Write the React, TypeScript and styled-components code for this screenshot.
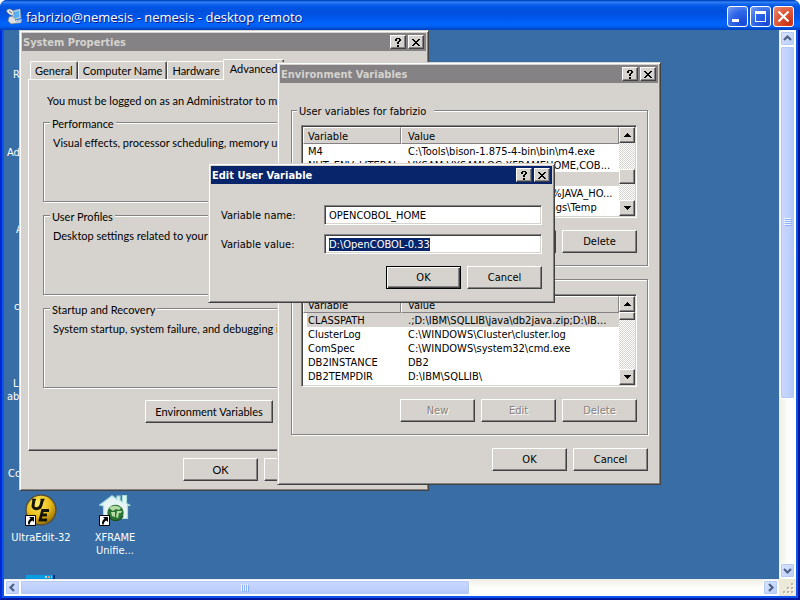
import React, { ReactNode, useEffect, useId, useRef } from "react";
import styled, { createGlobalStyle, css } from "styled-components";

const face = "#d6d3ce";
const shade = "#848284";
const dark = "#424142";
const navy = "#08246b";
const tahoma = `"DejaVu Sans Condensed", "Noto Sans", sans-serif`;
const shellFont = `Lato, "Liberation Sans", sans-serif`;

const Global = createGlobalStyle`
  *, *::before, *::after { box-sizing: border-box; }
  html, body, #root { height: 100%; margin: 0; }
  body { background: #fff; overflow: hidden; font: 11px/14px ${tahoma}; color: #000; }
  button, input { font: inherit; color: inherit; margin: 0; padding: 0; border-radius: 0; }
`;

/* ---------- remote desktop frame ---------- */

const Frame = styled.div`
  display: flex;
  flex-direction: column;
  height: 100vh;
  overflow: hidden;
  border-radius: 7px 7px 0 0;
  background: #0846e0;
`;

const FrameTitle = styled.header`
  display: flex;
  align-items: center;
  flex: none;
  height: 30px;
  padding: 3px 6px 0 6px;
  gap: 3px;
  color: #fff;
  font: 500 13px/18px "Open Sans", "Noto Sans", sans-serif;
  text-shadow: 1px 1px 0 #0a1883;
  background: linear-gradient(
    #0048c8 0, #0048c8 1px, #3c8cf8 2px, #2070f0 3px, #0058e6 6px, #0050dc 11px,
    #0054e8 17px, #0064fc 23px, #0062f6 26px, #0050d8 28px, #0040c0 30px
  );
`;

const FrameName = styled.h1`
  flex: 1;
  margin: 0;
  font: inherit;
  white-space: nowrap;
`;

const FrameButtons = styled.div`
  display: flex;
  gap: 2px;
`;

const FrameButton = styled.button<{ $danger?: boolean }>`
  display: grid;
  place-items: center;
  width: 21px;
  height: 21px;
  border: 1px solid #fff;
  border-radius: 3px;
  background: ${(p) =>
    p.$danger
      ? "radial-gradient(circle at 80% 85%, #c83010, #e0583a 55%, #ec9078)"
      : "radial-gradient(circle at 80% 85%, #1848d8, #3068e8 55%, #7ca0f4)"};
`;

const FrameBody = styled.div`
  flex: 1;
  min-height: 0;
  display: grid;
  grid-template: minmax(0, 1fr) 17px / minmax(0, 1fr) 17px;
  border: 2px solid #00149c;
  border-top: 0;
  border-left-color: #0028d4;
  padding: 0 2px 2px;
  background: #0c54ec;
`;

const Bar = styled.div<{ $horizontal?: boolean }>`
  display: flex;
  flex-direction: ${(p) => (p.$horizontal ? "row" : "column")};
  padding: 1px;
  background: linear-gradient(${(p) => (p.$horizontal ? "180deg" : "90deg")}, #eeede5, #fdfdfa 50%, #fff);
`;

const barSkin = css`
  border: 1px solid #fff;
  border-radius: 2px;
  box-shadow: inset 0 0 0 1px #b4c8f6;
`;

const BarButton = styled.button`
  display: grid;
  place-items: center;
  flex: none;
  width: 15px;
  height: 15px;
  ${barSkin}
  background: linear-gradient(135deg, #dce6ff, #b8ccfa);
`;

const BarThumb = styled.div<{ $horizontal?: boolean; $part: number }>`
  flex: ${(p) => p.$part} 1 0;
  display: grid;
  place-items: center;
  ${barSkin}
  background: linear-gradient(${(p) => (p.$horizontal ? "180deg" : "90deg")}, #cad8ff, #c0d0fb 60%, #b0c6f6);
`;

const BarRest = styled.div<{ $part: number }>`
  flex: ${(p) => p.$part} 1 0;
`;

const Corner = styled.div`
  display: grid;
  place-items: end;
  padding: 2px;
  background: #ece9d8;
`;

/* ---------- desktop ---------- */

const Desktop = styled.main`
  position: relative;
  overflow: hidden;
  background: #396da5;
`;

const Shortcut = styled.div<{ $x: number; $y: number }>`
  position: absolute;
  left: ${(p) => p.$x}px;
  top: ${(p) => p.$y}px;
  display: flex;
  flex-direction: column;
  align-items: center;
  gap: 5px;
  width: 74px;
  color: #fff;
  line-height: 13px;
  text-align: center;
`;

const Stub = styled.div<{ $x: number; $y: number }>`
  position: absolute;
  left: ${(p) => p.$x}px;
  top: ${(p) => p.$y}px;
  color: #fff;
  line-height: 13px;
  white-space: pre;
`;

/* ---------- classic controls ---------- */

const raised = css`
  border: 1px solid;
  border-color: #fff ${dark} ${dark} #fff;
  box-shadow: inset -1px -1px 0 ${shade};
  background: ${face};
`;

const Window = styled.section<{ $x: number; $y: number; $width: number; $shell?: boolean }>`
  position: absolute;
  left: ${(p) => p.$x}px;
  top: ${(p) => p.$y}px;
  width: ${(p) => p.$width}px;
  padding: 2px;
  border: 1px solid;
  border-color: ${face} ${dark} ${dark} ${face};
  box-shadow: inset 1px 1px 0 #fff, inset -1px -1px 0 ${shade};
  background: ${face};
  font-family: ${(p) => (p.$shell ? shellFont : tahoma)};
`;

const Caption = styled.div<{ $active?: boolean }>`
  display: flex;
  align-items: center;
  gap: 2px;
  height: 18px;
  padding: 0 2px 0 1px;
  background: ${(p) => (p.$active ? navy : shade)};
  color: ${(p) => (p.$active ? "#fff" : face)};
`;

const CaptionText = styled.h2`
  flex: 1;
  margin: 0;
  padding-top: 2px;
  font: bold 11px/16px ${tahoma};
  white-space: nowrap;
`;

const CaptionButton = styled.button`
  ${raised}
  display: grid;
  place-items: center;
  width: 16px;
  height: 14px;
  color: #000;
`;

const Push = styled.button<{ $wide?: boolean; $default?: boolean }>`
  ${raised}
  width: ${(p) => (p.$wide ? 128 : 75)}px;
  height: 23px;
  line-height: 18px;
  white-space: nowrap;
  ${(p) =>
    p.$default &&
    css`
      border-color: #000;
      box-shadow: inset 1px 1px 0 #fff, inset -1px -1px 0 ${dark}, inset -2px -2px 0 ${shade};
    `}
  &:disabled {
    color: ${shade};
    text-shadow: 1px 1px 0 #fff;
  }
`;

const Actions = styled.div<{ $top: number }>`
  display: flex;
  justify-content: flex-end;
  gap: 6px;
  margin-top: ${(p) => p.$top}px;
`;

const Group = styled.fieldset`
  min-width: 0;
  margin: 0 0 7px;
  padding: 8px 10px 12px 9px;
  border: 1px solid ${shade};
  box-shadow: inset 1px 1px 0 #fff, 1px 1px 0 #fff;
`;

const Legend = styled.legend<{ $long?: boolean }>`
  margin-left: ${(p) => (p.$long ? -4 : -3)}px;
  padding: 2px ${(p) => (p.$long ? 8 : 2)}px 0 2px;
  line-height: 11px;
  background: ${face};
`;

/* System Properties */

const PropertiesBody = styled.div`
  padding: 8px 6px 7px;
`;

const TabStrip = styled.div`
  display: flex;
  align-items: flex-end;
  height: 20px;
  padding-left: 2px;
`;

const Tab = styled.button<{ $active?: boolean }>`
  height: ${(p) => (p.$active ? 21 : 18)}px;
  padding: ${(p) => (p.$active ? "0 6px 3px" : "0 4px")};
  border: 1px solid;
  border-color: #fff ${dark} transparent #fff;
  border-bottom: 0;
  border-radius: 2px 2px 0 0;
  box-shadow: inset -1px 0 0 ${shade};
  background: ${face};
  white-space: nowrap;
  ${(p) =>
    p.$active &&
    css`
      position: relative;
      margin: 0 0 -1px -2px;
    `}
`;

const Pane = styled.div`
  padding: 14px 10px 27px 14px;
  border: 1px solid;
  border-color: #fff ${dark} ${dark} #fff;
  box-shadow: inset -1px -1px 0 ${shade};
`;

const Notice = styled.p`
  margin: 0 0 8px 4px;
  white-space: nowrap;
`;

const Topic = styled(Group)`
  min-height: 86px;
  padding-top: 7px;
`;

const TopicText = styled.p`
  margin: 0;
  white-space: nowrap;
  overflow: hidden;
`;

const PaneActions = styled(Actions)`
  gap: 8px;
`;

/* Environment Variables */

const VariablesBody = styled.div`
  padding: 21px 10px 11px 11px;
`;

const ListBox = styled.div`
  display: grid;
  grid-template-columns: minmax(0, 1fr) 16px;
  height: 93px;
  padding: 1px;
  border: 1px solid;
  border-color: ${shade} #fff #fff ${shade};
  box-shadow: inset 1px 1px 0 ${dark}, inset -1px -1px 0 ${face};
  background: #fff;
`;

const ListView = styled.div`
  overflow: hidden;
`;

const Table = styled.table`
  width: 100%;
  border-spacing: 0;
  table-layout: fixed;
  line-height: 12px;
`;

const HeadCell = styled.th<{ $first?: boolean }>`
  width: ${(p) => (p.$first ? "98px" : "auto")};
  height: 17px;
  padding: 2px 0 0 ${(p) => (p.$first ? 4 : 6)}px;
  border: 1px solid;
  border-color: #fff ${shade} ${shade} #fff;
  background: ${face};
  font-weight: normal;
  text-align: left;
`;

const Cell = styled.td<{ $first?: boolean; $selected?: boolean }>`
  height: 14px;
  padding: 2px 0 0 ${(p) => (p.$first ? 1 : 7)}px;
  border-left: ${(p) => (p.$first ? "4px solid #fff" : "0")};
  background: ${(p) => (p.$selected ? face : "#fff")};
  overflow: hidden;
  white-space: nowrap;
`;

const ClassicBar = styled.div`
  display: flex;
  flex-direction: column;
  background: repeating-conic-gradient(#fff 0 25%, ${face} 0 50%) 0 0 / 2px 2px;
`;

const ClassicBarButton = styled.button`
  ${raised}
  flex: none;
  display: grid;
  place-items: center;
  height: 16px;
`;

const ClassicTrack = styled.div<{ $before: number }>`
  flex: 1;
  padding-top: ${(p) => p.$before}px;
`;

const ClassicThumb = styled.div<{ $height: number }>`
  ${raised}
  height: ${(p) => p.$height}px;
`;

/* Edit User Variable */

const EditBody = styled.form`
  padding: 21px 10px 11px;
`;

const Fields = styled.div`
  display: grid;
  grid-template-columns: 103px minmax(0, 1fr);
  row-gap: 9px;
  align-items: center;
`;

const FieldLabel = styled.label`
  padding-top: 2px;
`;

const Field = styled.input`
  width: 100%;
  height: 20px;
  padding: 0 5px 0 4px;
  border: 1px solid;
  border-color: ${shade} #fff #fff ${shade};
  box-shadow: inset 1px 1px 0 ${dark}, inset -1px -1px 0 ${face};
  background: #fff;
  outline: none;
  &::selection {
    background: ${navy};
    color: #fff;
  }
`;

/* ---------- drawings ---------- */

const RemoteIcon = () => (
  <svg width="17" height="17" viewBox="0 0 17 17" aria-hidden="true">
    <path d="M6 3 L14 1 L15 10 L7 12 Z" fill="#d8e4ec" stroke="#8098b0" strokeWidth=".7" />
    <path d="M7.5 4 L13 2.6 L13.8 9 L8.3 10.5 Z" fill="#58b0f8" />
    <path d="M1 2 C3 0 7 1 8 5 C8 8 5 8 3 6 C1 5 0 3 1 2 Z" fill="#e8e8e4" stroke="#707880" strokeWidth=".7" />
    <path d="M3 3 L6 5" stroke="#606870" />
    <path d="M3 9 C6 7 9 9 10 13 L13 15 L5 16 L2 13 Z" fill="#dce0e0" stroke="#707880" strokeWidth=".7" />
    <path d="M10 12 L16 11 L15 15 L10 15 Z" fill="#b8c8d8" />
  </svg>
);

const CloseGlyph = () => (
  <svg width="8" height="7" viewBox="0 0 8 7" shapeRendering="crispEdges" aria-hidden="true">
    <path
      fill="#000"
      d="M0 0h2v1h-2zM6 0h2v1h-2zM1 1h2v1h-2zM5 1h2v1h-2zM2 2h4v1h-4zM3 3h2v1h-2zM2 4h4v1h-4zM1 5h2v1h-2zM5 5h2v1h-2zM0 6h2v1h-2zM6 6h2v1h-2z"
    />
  </svg>
);

const HelpGlyph = () => (
  <svg width="6" height="9" viewBox="0 0 6 9" shapeRendering="crispEdges" aria-hidden="true">
    <path fill="#000" d="M1 0h4v1h-4zM0 1h2v2h-2zM4 1h2v2h-2zM3 3h2v1h-2zM2 4h2v2h-2zM2 7h2v2h-2z" />
  </svg>
);

const Triangle = ({ down }: { down?: boolean }) => (
  <svg width="7" height="4" viewBox="0 0 7 4" shapeRendering="crispEdges" aria-hidden="true">
    <path
      fill="#000"
      d={
        down
          ? "M0 0h7v1h-7zM1 1h5v1h-5zM2 2h3v1h-3zM3 3h1v1h-1z"
          : "M3 0h1v1h-1zM2 1h3v1h-3zM1 2h5v1h-5zM0 3h7v1h-7z"
      }
    />
  </svg>
);

const chevrons = {
  up: "M1 6 L4.500 2.500 L8 6",
  down: "M1 3 L4.500 6.500 L8 3",
  left: "M6 1 L2.500 4.500 L6 8",
  right: "M3 1 L6.500 4.500 L3 8",
};

const Chevron = ({ to }: { to: keyof typeof chevrons }) => (
  <svg width="9" height="9" viewBox="0 0 9 9" aria-hidden="true">
    <path d={chevrons[to]} fill="none" stroke="#4d6185" strokeWidth="2.2" />
  </svg>
);

const Grip = ({ horizontal }: { horizontal?: boolean }) => (
  <svg width="8" height="8" viewBox="0 0 8 8" shapeRendering="crispEdges" aria-hidden="true">
    <path d={horizontal ? "M0 0h1v7h-1zM2 0h1v7h-1zM4 0h1v7h-1zM6 0h1v7h-1z" : "M0 0h7v1h-7zM0 2h7v1h-7zM0 4h7v1h-7zM0 6h7v1h-7z"} fill="#eef4fe" />
    <path d={horizontal ? "M1 1h1v7h-1zM3 1h1v7h-1zM5 1h1v7h-1zM7 1h1v7h-1z" : "M1 1h7v1h-7zM1 3h7v1h-7zM1 5h7v1h-7zM1 7h7v1h-7z"} fill="#8cb0f8" />
  </svg>
);

const SizeGrip = () => (
  <svg width="11" height="11" viewBox="0 0 11 11" shapeRendering="crispEdges" aria-hidden="true">
    <path fill="#fff" d="M9 1h2v2h-2zM5 5h2v2h-2zM9 5h2v2h-2zM1 9h2v2h-2zM5 9h2v2h-2zM9 9h2v2h-2z" />
    <path fill="#b8b4a4" d="M8 0h2v2h-2zM4 4h2v2h-2zM8 4h2v2h-2zM0 8h2v2h-2zM4 8h2v2h-2zM8 8h2v2h-2z" />
  </svg>
);

const ShortcutArrow = () => (
  <g>
    <path d="M.5 21.500h10v10h-10z" fill="#fff" stroke="#000" />
    <path d="M4 23h5v5l-1.600-1.600c-2 1-2.600 2-2.600 4h-1.600c-.6-2.600.4-4.400 2.400-5.800z" fill="#000" />
  </g>
);

const UltraEditIcon = () => (
  <svg width="32" height="32" viewBox="0 0 32 32" aria-hidden="true">
    <defs>
      <radialGradient id="gold" cx=".4" cy=".3" r=".75">
        <stop offset="0" stopColor="#fff06c" />
        <stop offset=".55" stopColor="#e8bc18" />
        <stop offset="1" stopColor="#8c6404" />
      </radialGradient>
    </defs>
    <circle cx="16" cy="16" r="15" fill="url(#gold)" stroke="#54503c" strokeWidth="1.400" />
    <path d="M9 5.500 L8 12 C8 15.500 15 16 16 11 L17.500 5.500" fill="none" stroke="#181404" strokeWidth="3" />
    <path d="M7 5.500h4M15.500 5.500h4" stroke="#181404" strokeWidth="1.400" />
    <path d="M24 16.500h-6.500l-2.400 9.500h7M16.500 21h5.500" fill="none" stroke="#181404" strokeWidth="2.800" />
    <ShortcutArrow />
  </svg>
);

const XframeIcon = () => (
  <svg width="32" height="32" viewBox="0 0 32 32" aria-hidden="true">
    <path
      d="M0.700 11 L13 1.800 L18 5.300 V2.200 H21 V6.500 L23.500 8 V1.500 H27.500 V9.500 L31.300 11.500 H28.500 V24.500 H4.500 V12 Z"
      fill="#e6f4f4"
      stroke="#a4dcdc"
      strokeWidth="1.200"
    />
    <circle cx="16.500" cy="19" r="8.200" fill="#2c7434" />
    <path d="M10 14c4-3 8-3 12 0l-2 2-3-1-3 2zM12 18l4 0 0 5-3-1zM18 17l5 0-1 2-2 0-1 5-2-1z" fill="#b4dca4" />
    <path d="M9 22c4 6 12 6 15 0" fill="none" stroke="#184c20" strokeWidth="1.200" />
    <ShortcutArrow />
  </svg>
);

const PanelIcon = () => (
  <svg width="32" height="32" viewBox="0 0 32 32" shapeRendering="crispEdges" aria-hidden="true">
    <path d="M1 0h29v32h-29z" fill="#0c9ce4" />
    <path d="M28 0h2v32h-2z" fill="#08246b" />
    <path d="M20 1h2v2h-2z" fill="#a8dcf8" />
    <path d="M23 1h2v2h-2zM26 1h1v2h-1z" fill="#f09060" />
  </svg>
);

/* ---------- composed parts ---------- */

const TitleBar = ({ text, active }: { text: string; active?: boolean }) => (
  <Caption $active={active}>
    <CaptionText>{text}</CaptionText>
    <CaptionButton type="button" aria-label="Help"><HelpGlyph /></CaptionButton>
    <CaptionButton type="button" aria-label="Close"><CloseGlyph /></CaptionButton>
  </Caption>
);

interface Variable {
  name: string;
  value: string;
}

interface VariableGroupProps {
  title: string;
  rows: Variable[];
  selected: string;
  thumb: { before: number; height: number };
  locked?: boolean;
}

const VariableGroup = ({ title, rows, selected, thumb, locked }: VariableGroupProps) => (
  <Group>
    <Legend $long>{title}</Legend>
    <ListBox>
      <ListView>
        <Table>
          <thead>
            <tr>
              <HeadCell $first>Variable</HeadCell>
              <HeadCell>Value</HeadCell>
            </tr>
          </thead>
          <tbody>
            {rows.map((row) => (
              <tr key={row.name}>
                <Cell $first $selected={row.name === selected}>{row.name}</Cell>
                <Cell $selected={row.name === selected}>{row.value}</Cell>
              </tr>
            ))}
          </tbody>
        </Table>
      </ListView>
      <ClassicBar>
        <ClassicBarButton type="button" aria-label="Scroll up"><Triangle /></ClassicBarButton>
        <ClassicTrack $before={thumb.before}>
          <ClassicThumb $height={thumb.height} />
        </ClassicTrack>
        <ClassicBarButton type="button" aria-label="Scroll down"><Triangle down /></ClassicBarButton>
      </ClassicBar>
    </ListBox>
    <Actions $top={12}>
      <Push type="button" disabled={locked}>New</Push>
      <Push type="button" disabled={locked}>Edit</Push>
      <Push type="button" disabled={locked}>Delete</Push>
    </Actions>
  </Group>
);

const topics = [
  { title: "Performance", text: "Visual effects, processor scheduling, memory usage, and virtual memory" },
  { title: "User Profiles", text: "Desktop settings related to your logon" },
  { title: "Startup and Recovery", text: "System startup, system failure, and debugging information" },
];

const SystemProperties = () => (
  <Window $x={15} $y={0} $width={410} $shell aria-label="System Properties">
    <TitleBar text="System Properties" />
    <PropertiesBody>
      <TabStrip role="tablist">
        <Tab type="button" role="tab">General</Tab>
        <Tab type="button" role="tab">Computer Name</Tab>
        <Tab type="button" role="tab">Hardware</Tab>
        <Tab type="button" role="tab" aria-selected $active>Advanced</Tab>
      </TabStrip>
      <Pane role="tabpanel">
        <Notice>You must be logged on as an Administrator to make most of these changes.</Notice>
        {topics.map((topic) => (
          <Topic key={topic.title}>
            <Legend>{topic.title}</Legend>
            <TopicText>{topic.text}</TopicText>
          </Topic>
        ))}
        <PaneActions $top={12}>
          <Push type="button" $wide>Environment Variables</Push>
          <Push type="button" $wide>Error Reporting</Push>
        </PaneActions>
      </Pane>
      <Actions $top={7}>
        <Push type="button">OK</Push>
        <Push type="button">Cancel</Push>
        <Push type="button" disabled>Apply</Push>
      </Actions>
    </PropertiesBody>
  </Window>
);

const userVariables: Variable[] = [
  { name: "M4", value: "C:\\Tools\\bison-1.875-4-bin\\bin\\m4.exe" },
  { name: "NUT_ENV_LITERAL", value: "VXSAM,VXSAMLOG,XFRAMEHOME,COB..." },
  { name: "OPENCOBOL_HOME", value: "D:\\OpenCOBOL-0.33" },
  { name: "PATH", value: "%XFRAMEHOME%\\bin\\win32;%JAVA_HO..." },
  { name: "TEMP", value: "%USERPROFILE%\\Local Settings\\Temp" },
];

const systemVariables: Variable[] = [
  { name: "CLASSPATH", value: ".;D:\\IBM\\SQLLIB\\java\\db2java.zip;D:\\IB..." },
  { name: "ClusterLog", value: "C:\\WINDOWS\\Cluster\\cluster.log" },
  { name: "ComSpec", value: "C:\\WINDOWS\\system32\\cmd.exe" },
  { name: "DB2INSTANCE", value: "DB2" },
  { name: "DB2TEMPDIR", value: "D:\\IBM\\SQLLIB\\" },
];

const EnvironmentVariables = () => (
  <Window $x={273} $y={32} $width={384} aria-label="Environment Variables">
    <TitleBar text="Environment Variables" />
    <VariablesBody>
      <VariableGroup
        title="User variables for fabrizio"
        rows={userVariables}
        selected="OPENCOBOL_HOME"
        thumb={{ before: 26, height: 15 }}
      />
      <VariableGroup
        title="System variables"
        rows={systemVariables}
        selected="CLASSPATH"
        thumb={{ before: 0, height: 8 }}
        locked
      />
      <Actions $top={13}>
        <Push type="button">OK</Push>
        <Push type="button">Cancel</Push>
      </Actions>
    </VariablesBody>
  </Window>
);

const EditUserVariable = () => {
  const nameId = useId();
  const valueId = useId();
  const valueRef = useRef<HTMLInputElement>(null);
  useEffect(() => {
    valueRef.current?.focus();
    valueRef.current?.select();
  }, []);
  return (
    <Window $x={204} $y={133} $width={347} aria-label="Edit User Variable">
      <TitleBar text="Edit User Variable" active />
      <EditBody onSubmit={(event) => event.preventDefault()}>
        <Fields>
          <FieldLabel htmlFor={nameId}>Variable name:</FieldLabel>
          <Field id={nameId} type="text" defaultValue="OPENCOBOL_HOME" />
          <FieldLabel htmlFor={valueId}>Variable value:</FieldLabel>
          <Field id={valueId} ref={valueRef} type="text" defaultValue={"D:\\OpenCOBOL-0.33"} />
        </Fields>
        <Actions $top={12}>
          <Push type="submit" $default>OK</Push>
          <Push type="button">Cancel</Push>
        </Actions>
      </EditBody>
    </Window>
  );
};

const stubs = [
  { x: 9, y: 38, text: "R" },
  { x: 3, y: 116, text: "Ad" },
  { x: 12, y: 193, text: "A" },
  { x: 10, y: 270, text: "c" },
  { x: 9, y: 347, text: "L" },
  { x: 3, y: 360, text: "ab" },
  { x: 4, y: 437, text: "Co" },
];

const DesktopShortcut = ({ x, y, icon, children }: { x: number; y: number; icon: ReactNode; children?: ReactNode }) => (
  <Shortcut $x={x} $y={y}>
    {icon}
    {children && <span>{children}</span>}
  </Shortcut>
);

export default function App() {
  return (
    <>
      <Global />
      <Frame>
        <FrameTitle>
          <RemoteIcon />
          <FrameName>fabrizio@nemesis - nemesis - desktop remoto</FrameName>
          <FrameButtons>
            <FrameButton type="button" aria-label="Minimize">
              <svg width="13" height="13" viewBox="0 0 13 13" shapeRendering="crispEdges" aria-hidden="true">
                <path d="M1 9h7v3h-7z" fill="#fff" />
              </svg>
            </FrameButton>
            <FrameButton type="button" aria-label="Maximize">
              <svg width="13" height="13" viewBox="0 0 13 13" shapeRendering="crispEdges" aria-hidden="true">
                <path d="M1 1h11v11h-11zM2 4v7h9v-7z" fill="#fff" fillRule="evenodd" />
              </svg>
            </FrameButton>
            <FrameButton type="button" aria-label="Close" $danger>
              <svg width="13" height="13" viewBox="0 0 13 13" aria-hidden="true">
                <path d="M1.500 1.500 L11.500 11.500 M11.500 1.500 L1.500 11.500" stroke="#fff" strokeWidth="2.200" />
              </svg>
            </FrameButton>
          </FrameButtons>
        </FrameTitle>
        <FrameBody>
          <Desktop>
            {stubs.map((stub) => (
              <Stub key={stub.y} $x={stub.x} $y={stub.y}>{stub.text}</Stub>
            ))}
            <DesktopShortcut x={0} y={464} icon={<UltraEditIcon />}>UltraEdit-32</DesktopShortcut>
            <DesktopShortcut x={74} y={464} icon={<XframeIcon />}>
              XFRAME
              <br />
              Unifie...
            </DesktopShortcut>
            <DesktopShortcut x={0} y={545} icon={<PanelIcon />} />
            <SystemProperties />
            <EnvironmentVariables />
            <EditUserVariable />
          </Desktop>
          <Bar>
            <BarButton type="button" aria-label="Scroll up"><Chevron to="up" /></BarButton>
            <BarThumb $part={352}><Grip /></BarThumb>
            <BarRest $part={165} />
            <BarButton type="button" aria-label="Scroll down"><Chevron to="down" /></BarButton>
          </Bar>
          <Bar $horizontal>
            <BarButton type="button" aria-label="Scroll left"><Chevron to="left" /></BarButton>
            <BarThumb $horizontal $part={448}><Grip horizontal /></BarThumb>
            <BarRest $part={293} />
            <BarButton type="button" aria-label="Scroll right"><Chevron to="right" /></BarButton>
          </Bar>
          <Corner><SizeGrip /></Corner>
        </FrameBody>
      </Frame>
    </>
  );
}
